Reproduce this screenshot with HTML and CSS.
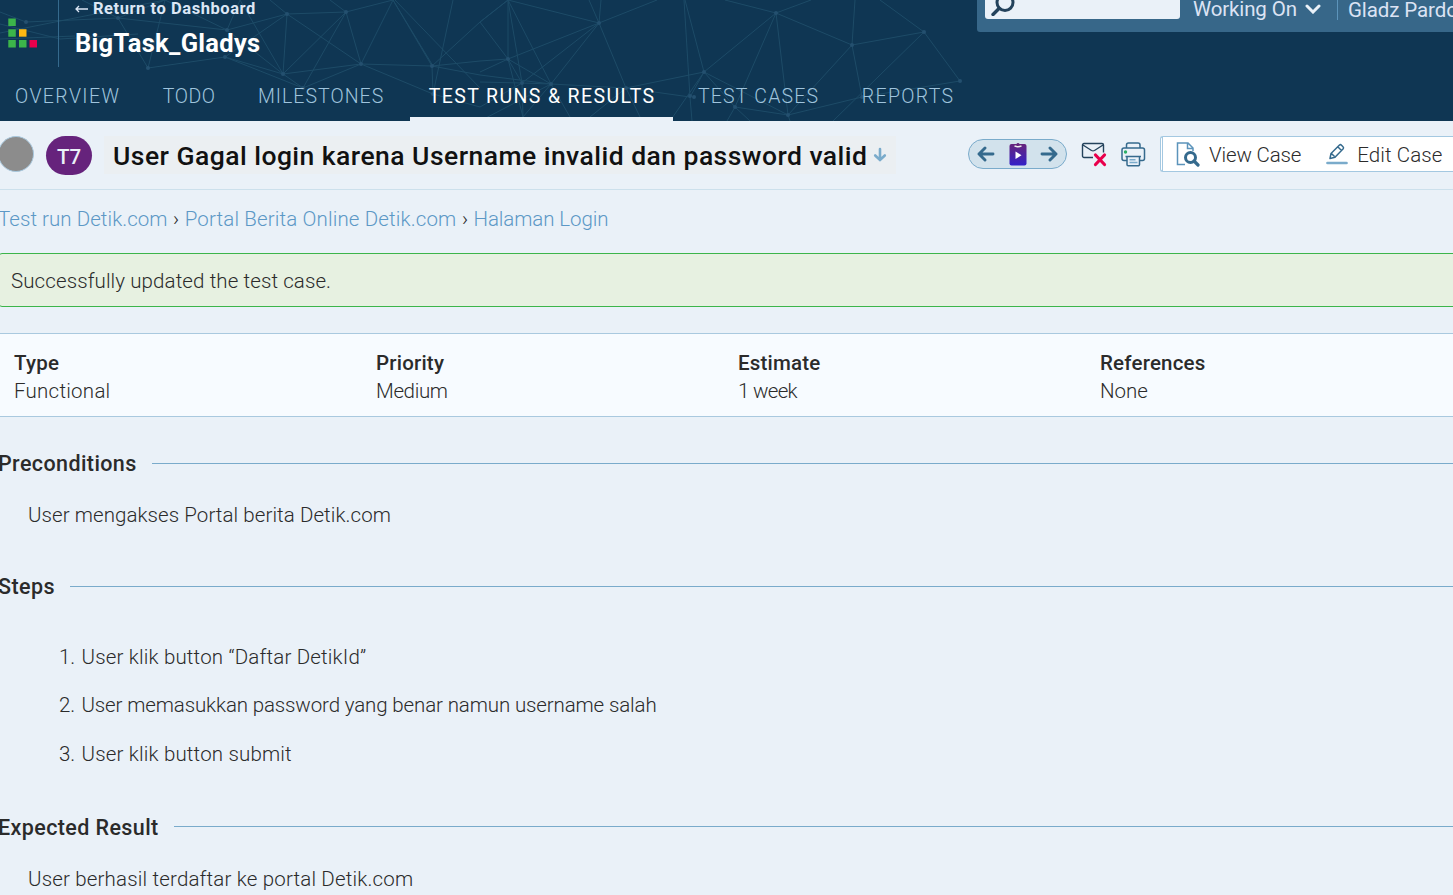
FILE: index.html
```html
<!DOCTYPE html>
<html lang="en">
<head>
<meta charset="utf-8">
<title>T7 User Gagal login</title>
<link rel="stylesheet" href="styles.css">
</head>
<body>
<header class="header">
  <svg class="network" width="980" height="121" viewBox="0 0 980 121" aria-hidden="true">
    <g class="network-lines">
      <path d="M0 12L26 22L118 18L227 30L287 14L346 12L361 64L432 66L480 61M0 39L75 36M0 24L60 39L138 34M0 33L165 0M118 18L148 68L225 57L283 74L361 64M118 18L82 0M118 18L165 0L148 68M165 0L227 30L283 74L303 88L225 57M227 30L240 0L283 74M287 14L270 0M287 14L225 57M287 14L283 74M287 14L361 64M303 88L346 12L283 74M346 12L393 0L361 64L433 94M346 12L330 0M393 0L432 66L433 94L480 107M393 0L433 66M395 0L480 88M453 0L433 94M432 66L480 22L508 0M361 64L303 88M432 66L480 75"/>
      <path d="M480 22L508 59L599 23L508 0L551 84L599 23L522 83L508 0L508 59L522 83L551 84L626 88L599 23L657 0M599 23L589 0M599 23L601 0M508 0L480 22M480 61L508 59L523 117M480 72L508 59M480 82L522 83L480 107M522 83L523 117L551 84L570 117M551 84L508 59M626 88L704 72L776 13L735 107L704 72L685 0M684 0L690 97L626 88L640 117M704 72L670 121M704 72L690 97L692 121M704 72L788 115L735 107L727 121M735 107L750 121M776 13L725 0M776 13L811 0M776 13L852 45L924 32L880 0M776 13L788 115L852 45L862 97L960 81L924 32L833 121M852 45L855 0M788 115L862 97M788 115L790 121M626 88L590 117M480 75L551 84L480 121"/>
    </g>
    <g class="network-dots">
      <circle cx="26" cy="22" r="2"/><circle cx="118" cy="18" r="2"/><circle cx="227" cy="30" r="2"/><circle cx="287" cy="14" r="2"/><circle cx="346" cy="12" r="2"/><circle cx="225" cy="57" r="2"/><circle cx="148" cy="68" r="2"/><circle cx="283" cy="74" r="2"/><circle cx="303" cy="88" r="2"/><circle cx="361" cy="64" r="2"/><circle cx="432" cy="66" r="2"/><circle cx="433" cy="94" r="2"/><circle cx="508" cy="59" r="2"/><circle cx="522" cy="83" r="2"/><circle cx="551" cy="84" r="2"/><circle cx="599" cy="23" r="2"/><circle cx="626" cy="88" r="2"/><circle cx="690" cy="96" r="2"/><circle cx="694" cy="97" r="2"/><circle cx="704" cy="72" r="2"/><circle cx="776" cy="13" r="2"/><circle cx="735" cy="107" r="2"/><circle cx="788" cy="115" r="2"/><circle cx="852" cy="45" r="2"/><circle cx="924" cy="32" r="2"/><circle cx="960" cy="81" r="2"/><circle cx="862" cy="97" r="2"/>
    </g>
  </svg>
  <div class="brand-row">
    <svg class="logo" width="30" height="30" viewBox="0 0 30 30">
      <path fill="#3cb54a" d="M.3.500h7.500V8H.3zM.3 11.200h7.500v7.500H.3zM.3 22h7.500v7.500H.3zM11 22h7.500v7.500H11z"/>
      <path fill="#fdb913" d="M11 11.200h7.500v7.500H11z"/><path fill="#e9004c" d="M21.500 22H29v7.500h-7.500z"/>
    </svg>
    <div class="project">
      <a class="return"><svg width="13" height="8" viewBox="0 0 13 8"><path d="M13 4H1M4 1L1 4l3 3" fill="none" stroke="currentColor" stroke-width="1.3"/></svg><span class="return-text">Return to Dashboard</span></a>
      <div class="project-name">BigTask_Gladys</div>
    </div>
    <div class="userbar">
      <div class="search"><svg width="26" height="24" viewBox="0 0 26 24" fill="none" stroke="#24435c"><circle cx="16" cy="10.500" r="8" stroke-width="3"/><path d="M10 16.500L4 22.500" stroke-width="3.400" stroke-linecap="round"/></svg></div>
      <div class="menu working"><span>Working On</span><svg width="16" height="10" viewBox="0 0 16 10"><path d="M2 2l6 6 6-6" fill="none" stroke="#eaf1f8" stroke-width="3" stroke-linecap="round"/></svg></div>
      <div class="menu user"><span>Gladz Pardo</span></div>
    </div>
  </div>
  <nav class="tabs">
    <a class="tab overview">OVERVIEW</a>
    <a class="tab todo">TODO</a>
    <a class="tab milestones">MILESTONES</a>
    <a class="tab active">TEST RUNS &amp; RESULTS</a>
    <a class="tab cases">TEST CASES</a>
    <a class="tab reports">REPORTS</a>
  </nav>
</header>

<section class="titlebar">
  <span class="status"></span>
  <span class="badge">T7</span>
  <h1 class="title"><span>User Gagal login karena Username invalid dan password valid</span><svg width="14" height="16" viewBox="0 0 14 16"><path d="M7 2v11M2.200 8.500L7 13l4.800-4.500" fill="none" stroke="#7aabcb" stroke-width="2.600" stroke-linecap="round"/></svg></h1>
  <div class="tools">
    <div class="pager">
      <svg width="18" height="16" viewBox="0 0 18 16"><path d="M16 8H2M8 2L2 8l6 6" fill="none" stroke="#356a8d" stroke-width="2.900" stroke-linecap="round" stroke-linejoin="round"/></svg>
      <svg width="18" height="24" viewBox="0 0 18 24"><defs><linearGradient id="clip" x1="0" y1="0" x2="0" y2="1"><stop offset="0" stop-color="#66237c"/><stop offset="1" stop-color="#3321c8"/></linearGradient></defs><rect x=".5" y="2" width="17" height="21.500" rx="2" fill="url(#clip)"/><path d="M5 2h2.500a1.600 1.600 0 0 1 3 0H13v2.500H5z" fill="#66237c"/><path d="M5.500 3.900q3.500 1.800 7 0" stroke="#eee" stroke-width="1.500" fill="none"/><path d="M6.500 9.500v7.500l6-3.700z" fill="#fff"/></svg>
      <svg width="18" height="16" viewBox="0 0 18 16"><path d="M2 8H16M10 2l6 6-6 6" fill="none" stroke="#356a8d" stroke-width="2.900" stroke-linecap="round" stroke-linejoin="round"/></svg>
    </div>
    <svg class="mail" width="26" height="25" viewBox="0 0 26 25" fill="none"><path d="M12 15.500H3a1.500 1.500 0 0 1-1.500-1.500V3A1.500 1.500 0 0 1 3 1.500h18A1.500 1.500 0 0 1 22.500 3v7.500M2 3l8.500 5.500q1.500.8 3 0L22 3" stroke="#24435c" stroke-width="1.400"/><path d="M14.500 13l9 9.500M23.500 13l-9 9.500" stroke="#e9004c" stroke-width="3.200" stroke-linecap="round"/></svg>
    <svg class="printer" width="25" height="25" viewBox="0 0 25 25" fill="none" stroke="#356a8d" stroke-width="1.500"><path d="M5.500 6V3a2 2 0 0 1 2-2h9.500a2 2 0 0 1 2 2v3M6 18.500H3a2 2 0 0 1-2-2v-8.500a2 2 0 0 1 2-2h18.500a2 2 0 0 1 2 2v8.500a2 2 0 0 1-2 2h-3"/><path d="M6 14.500h12.500v8a1.300 1.300 0 0 1-1.300 1.300h-10A1.300 1.300 0 0 1 6 22.500zM4.500 14.500h15.500"/><path d="M8.500 17.700h6M8.500 20.500h8" stroke="#7aabcb"/><circle cx="4.500" cy="10" r="1.700" fill="#2bae66" stroke="none"/></svg>
    <div class="actions">
      <a class="action view"><svg width="24" height="25" viewBox="0 0 24 25" fill="none"><path d="M9 22.500H1.500V1H12l5 5v3M11.500 1v5.500H17" stroke="#5c94bb" stroke-width="1.500"/><circle cx="14.500" cy="15.500" r="5" stroke="#356a8d" stroke-width="3"/><path d="M18 19l4 4" stroke="#356a8d" stroke-width="3.200" stroke-linecap="round"/></svg><span>View Case</span></a>
      <a class="action edit"><svg width="22" height="22" viewBox="0 0 22 22" fill="none"><path d="M4 15.500l1-5 8.500-8.500q1-.8 2 .2l1.500 1.500q1 1 .2 2L9 14.200zM12 4l3.500 3.500M5.500 10.500l3 3" stroke="#356a8d" stroke-width="1.500" stroke-linejoin="round"/><path d="M1.500 20h19" stroke="#7aabcb" stroke-width="2.700" stroke-linecap="round"/></svg><span>Edit Case</span></a>
    </div>
  </div>
</section>

<main class="content">
  <nav class="crumbs"><a class="crumb-run">Test run Detik.com</a><i>›</i><a class="crumb-portal">Portal Berita Online Detik.com</a><i>›</i><a class="crumb-page">Halaman Login</a></nav>
  <div class="message">Successfully updated the test case.</div>
  <dl class="facts">
    <div><dt>Type</dt><dd class="type">Functional</dd></div>
    <div><dt>Priority</dt><dd class="priority">Medium</dd></div>
    <div><dt>Estimate</dt><dd class="estimate">1 week</dd></div>
    <div><dt>References</dt><dd>None</dd></div>
  </dl>
  <h2 class="heading">Preconditions</h2>
  <p class="text">User mengakses Portal berita Detik.com</p>
  <h2 class="heading heading-steps">Steps</h2>
  <ol class="steps">
    <li><b>1.</b><span>User klik button “Daftar DetikId”</span></li>
    <li><b>2.</b><span class="long">User memasukkan password yang benar namun username salah</span></li>
    <li><b>3.</b><span>User klik button submit</span></li>
  </ol>
  <h2 class="heading">Expected Result</h2>
  <p class="text result">User berhasil terdaftar ke portal Detik.com</p>
</main>
</body>
</html>
```
FILE: styles.css
```css
* { box-sizing: border-box; }
body { margin: 0; width: 1453px; height: 895px; overflow: hidden; background: #eaf1f8; color: #2b2b2b; font: 300 20.500px/28px Roboto, "Liberation Sans", sans-serif; }
svg { display: block; flex: none; }
span, a { white-space: nowrap; }
.header { position: relative; height: 121px; background: #0f3653; overflow: hidden; }
.network { position: absolute; left: 0; top: 0; }
.network-lines { fill: none; stroke: #1d4b67; stroke-width: 1; }
.network-dots { fill: #24506f; }
.brand-row { position: relative; display: flex; height: 72px; align-items: flex-start; }
.logo { margin: 18px 0 0 8px; }
.project { margin-left: 20px; padding-left: 16px; height: 67px; border-left: 1px solid #356a8d; color: #fff; }
.return { display: flex; align-items: center; gap: 5px; height: 18px; color: #dce6f5; font-size: 16.500px; font-weight: 700; }
.return-text { letter-spacing: .55px; }
.project-name { margin-top: 8px; font-size: 25.500px; line-height: 34px; font-weight: 700; letter-spacing: .3px; }
.userbar { display: flex; margin-left: auto; width: 476px; height: 32px; background: #376789; border-bottom-left-radius: 3px; color: #dce3f4; font-weight: 400; overflow: hidden; }
.search { flex: none; margin-left: 8px; width: 195px; height: 19px; background: #eaf1f8; border-radius: 0 0 3px 3px; overflow: hidden; }
.search svg { margin: -8px 0 0 4px; }
.menu { display: flex; flex: none; align-items: center; height: 20px; line-height: 20px; }
.menu span { margin-top: -3px; }
.working { margin-left: 13px; width: 145px; border-right: 1px solid #5c94bb; letter-spacing: -.14px; }
.working svg { margin: -2px 0 0 8px; }
.user { margin-left: 10px; letter-spacing: -.1px; }
.user span { margin-top: -1px; }
.tabs { position: relative; display: flex; gap: 5.500px; height: 49px; margin-left: -4px; color: #9fc4dd; font-size: 19.500px; }
.tab { display: flex; height: 49px; padding: 11px 18px 0 19px; }
.overview { letter-spacing: 1.400px; }
.todo { letter-spacing: .5px; }
.milestones { letter-spacing: 1.030px; }
.cases { letter-spacing: 1.200px; }
.reports { letter-spacing: 1.300px; }
.active { margin-left: 2px; color: #fff; border-bottom: 4px solid #eaf1f8; font-weight: 400; letter-spacing: 1.370px; }
.titlebar { display: flex; height: 69px; border-bottom: 1px solid #cce0ec; }
.status { width: 36px; height: 36px; margin: 15px 0 0 -2px; border: 1px solid #a8c8de; border-radius: 50%; background: #8c8c8c; }
.badge { display: flex; align-items: center; justify-content: center; width: 46px; height: 39px; margin: 15px 0 0 12px; padding-top: 2px; border-radius: 20px; background: #66237c; color: #eaf1f8; font-weight: 500; }
.title { display: flex; align-items: center; margin: 15px 0 0 12px; padding: 0 9px; height: 38px; background: #ebeff2; color: #111; font-size: 26.500px; font-weight: 500; letter-spacing: .46px; }
.title span { padding-top: 2px; }
.title svg { margin-left: 6px; }
.tools { display: flex; margin-left: auto; }
.pager { display: flex; align-items: center; justify-content: space-between; margin-top: 18px; width: 99px; height: 30px; padding: 0 8px; border: 1px solid #7aabcb; border-radius: 15px; background: #d2e2ec; }
.mail { margin: 21px 0 0 14px; }
.printer { margin: 21px 0 0 14px; }
.actions { display: flex; margin: 15px 0 0 14px; width: 293px; height: 36px; border: 1px solid #a4c8e1; border-right: 0; border-radius: 3px 0 0 3px; background: #fff; }
.action { display: flex; align-items: center; }
.action span { margin-left: 9px; padding-top: 2px; }
.view { margin-left: 1px; border-left: 1px solid #a4c8e1; padding-left: 13px; letter-spacing: -.15px; }
.edit { margin-left: 25px; letter-spacing: .1px; }
.crumbs { display: flex; gap: 5.500px; margin-top: 15px; margin-left: -2px; color: #5c98c6; }
.crumbs i { color: #2b2b2b; font-style: normal; }
.crumb-run { letter-spacing: .05px; }
.crumb-portal { letter-spacing: .14px; }
.crumb-page { letter-spacing: -.09px; }
.message { margin: 20px 0 0 -2px; height: 54px; padding: 13px 12px; border: 1px solid #3cb54a; border-radius: 4px; background: #e7f1e1; width: 1460px; letter-spacing: .1px; }
.facts { display: grid; grid-template-columns: repeat(4, 362px); margin: 26px 0 0; padding: 15px 0 0 14px; height: 84px; border: solid #a9c9df; border-width: 1px 0; background: #f7fbff; }
dt { font-weight: 500; letter-spacing: .2px; }
dd { margin: 0; }
.type { letter-spacing: .25px; }
.priority { letter-spacing: -.36px; }
.estimate { letter-spacing: -.7px; }
.heading { display: flex; align-items: flex-start; gap: 15px; margin: 32px 0 0 -2px; height: 28px; font-size: 21.500px; line-height: 30px; font-weight: 500; letter-spacing: .4px; }
.heading-steps { letter-spacing: .45px; }
.heading::after { content: ""; flex: 1; height: 1px; margin-top: 13.500px; background: #7aabcb; }
.text { margin: 24px 0 43px 28px; letter-spacing: .07px; }
.result { letter-spacing: .17px; }
.steps { margin: 43px 0 0 59px; padding: 0; list-style: none; }
.steps li { display: flex; margin-bottom: 20.300px; letter-spacing: .17px; }
.steps b { width: 22.500px; font-weight: 300; letter-spacing: 0; }
.steps .long { letter-spacing: -.13px; }
.steps + .heading { margin-top: 45.100px; }
```
